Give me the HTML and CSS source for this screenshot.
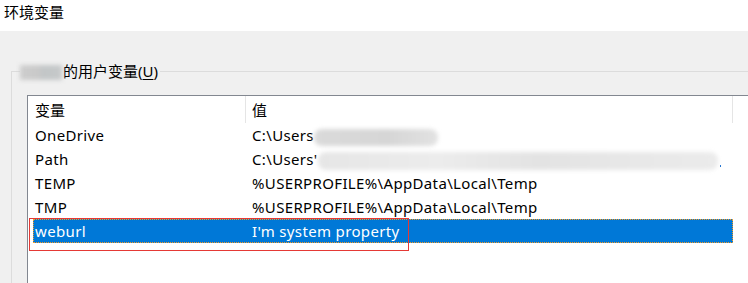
FILE: index.html
```html
<!DOCTYPE html>
<html lang="zh-CN">
<head>
<meta charset="UTF-8">
<title>环境变量</title>
<link rel="stylesheet" href="styles.css">
</head>
<body>

<div class="window">
    <div class="titlebar">环境变量</div>

    <div class="client">
        <fieldset class="group">
            <legend><span class="smudge smudge-name"></span>的用户变量(<u>U</u>)</legend>

            <div class="listview">
                <div class="lv-head">
                    <div class="hcol hcol-name">变量</div>
                    <div class="hcol hcol-value">值</div>
                </div>

                <div class="lv-row">
                    <div class="cell cell-name">OneDrive</div>
                    <div class="cell">C:\Users<span class="smudge smudge-short"></span></div>
                </div>
                <div class="lv-row">
                    <div class="cell cell-name">Path</div>
                    <div class="cell">C:\Users'<span class="smudge smudge-long"></span><span class="speck"></span></div>
                </div>
                <div class="lv-row">
                    <div class="cell cell-name">TEMP</div>
                    <div class="cell">%USERPROFILE%\AppData\Local\Temp</div>
                </div>
                <div class="lv-row">
                    <div class="cell cell-name">TMP</div>
                    <div class="cell">%USERPROFILE%\AppData\Local\Temp</div>
                </div>
                <div class="lv-row selected">
                    <div class="cell cell-name">weburl</div>
                    <div class="cell">I'm system property</div>
                </div>

                <!-- red highlight drawn over the new entry -->
                <div class="mark"></div>
            </div>
        </fieldset>
    </div>
</div>

</body>
</html>
```

FILE: styles.css
```css
body {
    margin: 0;
    padding: 0;
    font-family: "Noto Sans", "Noto Sans CJK SC", sans-serif;
    font-size: 15px;
    color: #000;
    background-color: #ffffff;
}

.window {
    width: 748px;
    height: 283px;
    overflow: hidden;
}

.titlebar {
    height: 31px;
    line-height: 25px;
    padding-left: 4px;
    background-color: #ffffff;
    box-sizing: border-box;
}

.client {
    height: 252px;
    background-color: #f0f0f0;
    padding-top: 32px;
    box-sizing: border-box;
}

.group {
    margin: 0 0 0 11px;
    padding: 15px 0 0 15px;
    width: 900px;
    border: 1px solid #dcdcdc;
    min-width: 0;
}

.group legend {
    padding: 0 2px 0 0;
    margin-left: -7px;
    line-height: 16px;
}

.group legend u {
    text-decoration-thickness: 1px;
    text-underline-offset: 2px;
}

.smudge {
    display: inline-block;
    vertical-align: middle;
    filter: blur(2px);
}
.smudge-name {
    width: 42px;
    height: 15px;
    margin-right: 1px;
    background: linear-gradient(90deg, #cdcdcd 0%, #c9c9c9 45%, #c2c6c7 55%, #c6c9ca 100%);
}
.smudge-short {
    width: 124px;
    height: 17px;
    background: linear-gradient(90deg, #dadada 0%, #d6d6d6 60%, #e2e2e2 100%);
    border-radius: 8px;
}
.smudge-long {
    width: 400px;
    height: 18px;
    background: linear-gradient(90deg, #e6e6e6 0%, #ececec 30%, #e3e3e3 55%, #e8e8e8 80%, #ebebeb 100%);
    border-radius: 8px;
}
.speck {
    display: inline-block;
    width: 1px;
    height: 2px;
    margin-left: 2px;
    vertical-align: -2px;
    background-color: #1a6fd0;
}

.listview {
    position: relative;
    height: 300px;
    background-color: #ffffff;
    border-top: 1px solid #828790;
    border-left: 1px solid #828790;
}

.lv-head {
    display: flex;
    height: 27px;
    margin-left: 5px;
}
.hcol {
    display: flex;
    align-items: center;
    box-sizing: border-box;
}
.hcol-name {
    width: 213px;
    padding-left: 2px;
    border-right: 1px solid #e5e5e5;
}
.hcol-value {
    width: 487px;
    padding-left: 6px;
    border-right: 1px solid #e5e5e5;
}

.lv-row {
    display: flex;
    align-items: center;
    width: 700px;
    height: 24px;
    margin-left: 5px;
    white-space: nowrap;
    letter-spacing: 0.35px;
}
.cell {
    box-sizing: border-box;
}
.cell-name {
    width: 219px;
    padding-left: 2px;
}

.lv-row.selected {
    background-color: #0078d7;
    color: #ffffff;
    outline: 1px dotted #f59a23;
    outline-offset: -1px;
}

.mark {
    position: absolute;
    left: 1px;
    top: 122px;
    width: 380px;
    height: 33px;
    border: 1px solid #e53935;
    box-sizing: border-box;
}
```
